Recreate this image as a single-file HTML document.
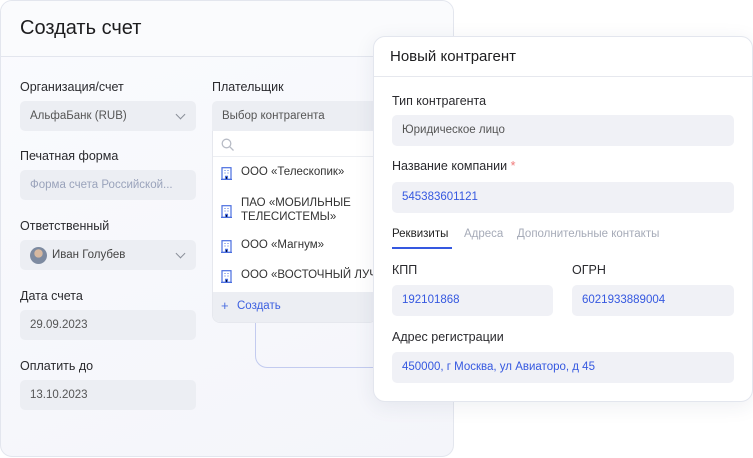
<!DOCTYPE html>
<html><head><meta charset="utf-8"><style>
*{box-sizing:border-box;margin:0;padding:0}
body{width:753px;height:458px;background:#fff;font-family:"Liberation Sans",sans-serif;position:relative;overflow:hidden;color:#222}
.abs{position:absolute}
.main{left:0;top:0;width:454px;height:457px;border:1px solid #e3e6ee;border-radius:12px;background:linear-gradient(160deg,#fafbfe,#f4f5fa);overflow:hidden}
.mh{left:-1px;top:-1px;width:454px;height:57px;border-bottom:1px solid #e3e6ee;background:#fafbfd}
.t1{left:19px;top:16px;font-size:20px;color:#1d1d1f}
.lbl{font-size:12.5px;color:#2a2a2e}
.fld{background:#eceef3;border-radius:5px;height:30px;font-size:11.5px;color:#555;padding-left:10px;line-height:30px}
.chev{position:absolute;right:12px;top:10px;width:7px;height:7px;border-right:1.5px solid #8a8f99;border-bottom:1.5px solid #8a8f99;transform:rotate(45deg)}
.dd{left:211px;top:130px;width:165px;height:192px;background:#fff;border-radius:0 0 8px 8px;border:1px solid #e6e8ee;border-top:none;overflow:hidden}
.it{font-size:11.5px;color:#333;left:28px}
.ic{left:8px;width:11px;height:13px}
.card{left:373px;top:36px;width:380px;height:366px;background:#fff;border:1px solid #e3e6ee;border-radius:12px;box-shadow:0 4px 20px rgba(40,50,90,.08)}
.rf{background:#f0f1f6;border-radius:5px;height:31px;line-height:31px;font-size:11.5px;padding-left:10px;color:#3558e0}
</style></head><body>
<div class="abs main">
<div class="abs mh"></div>
<div class="abs t1">Создать счет</div>
<div class="abs" style="left:254px;top:300px;width:130px;height:67px;border-left:1px solid #c3cbef;border-bottom:1px solid #c3cbef;border-bottom-left-radius:12px"></div>
<div class="abs lbl" style="left:19px;top:79px">Организация/счет</div>
<div class="abs fld" style="left:19px;top:100px;width:176px">АльфаБанк (RUB)<span class="chev"></span></div>
<div class="abs lbl" style="left:19px;top:148px">Печатная форма</div>
<div class="abs fld" style="left:19px;top:169px;width:176px;color:#9aa3bb">Форма счета Российской...</div>
<div class="abs lbl" style="left:19px;top:218px">Ответственный</div>
<div class="abs fld" style="left:19px;top:239px;width:176px;padding-left:32px;color:#444">Иван Голубев<span class="chev"></span>
<span style="position:absolute;left:10px;top:7px;width:17px;height:17px;border-radius:50%;background:radial-gradient(circle at 50% 38%,#d6b8a0 0 30%,#7d8aa0 32%)"></span></div>
<div class="abs lbl" style="left:19px;top:288px">Дата счета</div>
<div class="abs fld" style="left:19px;top:309px;width:176px">29.09.2023</div>
<div class="abs lbl" style="left:19px;top:358px">Оплатить до</div>
<div class="abs fld" style="left:19px;top:379px;width:176px">13.10.2023</div>
<div class="abs lbl" style="left:211px;top:79px">Плательщик</div>
<div class="abs fld" style="left:211px;top:100px;width:170px;border-radius:5px 0 0 0">Выбор контрагента</div>
<div class="abs dd">
<svg class="abs" style="left:8px;top:7px" width="14" height="14" viewBox="0 0 14 14"><circle cx="5.5" cy="5.5" r="4.3" fill="none" stroke="#b8bcc6" stroke-width="1.3"/><path d="M8.7 8.7L12.5 12.5" stroke="#b8bcc6" stroke-width="1.3"/></svg>
<div class="abs" style="left:0;top:25px;width:165px;height:1px;background:#eceef2"></div>
<svg class="abs ic" style="top:36px" viewBox="0 0 11 13"><rect x="1" y=".7" width="9" height="11.6" fill="none" stroke="#4a6ee0" stroke-width="1.2"/><path d="M3.5 3.5h1M6.5 3.5h1M3.5 6h1M6.5 6h1M4.5 12.3v-3h2v3M0 12.4h11" stroke="#4a6ee0" stroke-width="1.1"/></svg>
<div class="abs it" style="top:35px">ООО «Телескопик»</div>
<svg class="abs ic" style="top:74px" viewBox="0 0 11 13"><rect x="1" y=".7" width="9" height="11.6" fill="none" stroke="#4a6ee0" stroke-width="1.2"/><path d="M3.5 3.5h1M6.5 3.5h1M3.5 6h1M6.5 6h1M4.5 12.3v-3h2v3M0 12.4h11" stroke="#4a6ee0" stroke-width="1.1"/></svg>
<div class="abs it" style="top:65px;line-height:14px">ПАО «МОБИЛЬНЫЕ<br>ТЕЛЕСИСТЕМЫ»</div>
<svg class="abs ic" style="top:109px" viewBox="0 0 11 13"><rect x="1" y=".7" width="9" height="11.6" fill="none" stroke="#4a6ee0" stroke-width="1.2"/><path d="M3.5 3.5h1M6.5 3.5h1M3.5 6h1M6.5 6h1M4.5 12.3v-3h2v3M0 12.4h11" stroke="#4a6ee0" stroke-width="1.1"/></svg>
<div class="abs it" style="top:108px">ООО «Магнум»</div>
<svg class="abs ic" style="top:139px" viewBox="0 0 11 13"><rect x="1" y=".7" width="9" height="11.6" fill="none" stroke="#4a6ee0" stroke-width="1.2"/><path d="M3.5 3.5h1M6.5 3.5h1M3.5 6h1M6.5 6h1M4.5 12.3v-3h2v3M0 12.4h11" stroke="#4a6ee0" stroke-width="1.1"/></svg>
<div class="abs it" style="top:138px;white-space:nowrap">ООО «ВОСТОЧНЫЙ ЛУЧ»</div>
<div class="abs" style="left:0;top:161px;width:165px;height:31px;background:#eceef3"></div>
<div class="abs" style="left:8px;top:167px;font-size:13px;color:#4a6ee0">+</div>
<div class="abs" style="left:24px;top:169px;font-size:11.5px;color:#3b5fe0">Создать</div>
</div>
</div>
<div class="abs card">
<div class="abs" style="left:16px;top:11px;font-size:15px;color:#1d1d1f">Новый контрагент</div>
<div class="abs" style="left:0;top:39px;width:378px;height:1px;background:#e6e8ee"></div>
<div class="abs lbl" style="left:18px;top:57px">Тип контрагента</div>
<div class="abs rf" style="left:18px;top:78px;width:342px;color:#555">Юридическое лицо</div>
<div class="abs lbl" style="left:18px;top:122px">Название компании <span style="color:#f07a7a">*</span></div>
<div class="abs rf" style="left:18px;top:145px;width:342px">545383601121</div>
<div class="abs" style="left:18px;top:191px;font-size:11.5px;color:#222">Реквизиты</div>
<div class="abs" style="left:90px;top:191px;font-size:11.5px;color:#a6abb8">Адреса</div>
<div class="abs" style="left:143px;top:191px;font-size:11.5px;color:#a6abb8">Дополнительные контакты</div>
<div class="abs" style="left:18px;top:210px;width:60px;height:2px;background:#3558e0"></div>
<div class="abs lbl" style="left:18px;top:226px">КПП</div>
<div class="abs lbl" style="left:198px;top:226px">ОГРН</div>
<div class="abs rf" style="left:18px;top:248px;width:161px">192101868</div>
<div class="abs rf" style="left:198px;top:248px;width:162px">6021933889004</div>
<div class="abs lbl" style="left:18px;top:293px">Адрес регистрации</div>
<div class="abs rf" style="left:18px;top:315px;width:342px">450000, г Москва, ул Авиаторо, д 45</div>
</div>
</body></html>
